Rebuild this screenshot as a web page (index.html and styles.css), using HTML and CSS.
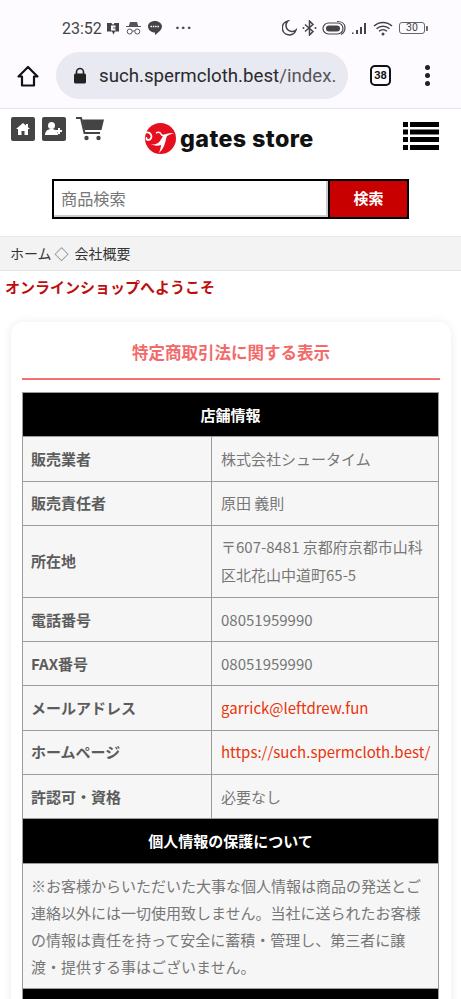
FILE: index.html
```html
<!DOCTYPE html>
<html lang="ja">
<head>
<meta charset="utf-8">
<title>特定商取引法に関する表示</title>
<link rel="stylesheet" href="styles.css">
</head>
<body>
<div class="chrome">
  <div class="status">
    <span class="time">23:52</span>
    <div class="status-left">
      <svg width="12" height="13" viewBox="0 0 12 13"><path d="M0 1h4.500l1 1.500h1L7.500 1H12v8.500H8L6.500 12.500 5 9.500H0z" fill="#444"/><path d="M4 3.500h4.500v2h-2.500v1h2.500v2H4z" fill="#fdfbff"/></svg>
      <svg width="15" height="14" viewBox="0 0 15 14"><path d="M4 1h7l1.200 4H15v1H0V5h2.800z" fill="#555"/><circle cx="3.700" cy="10.500" r="2.500" fill="none" stroke="#555"/><circle cx="11.300" cy="10.500" r="2.500" fill="none" stroke="#555"/><path d="M6.200 10h2.600" stroke="#555"/></svg>
      <svg width="14" height="14" viewBox="0 0 14 14"><path d="M7 0c3.900 0 7 2.500 7 5.500 0 2.800-3 5.500-7 8.500v-2.500c-3.900 0-7-2.600-7-6S3.100 0 7 0z" fill="#444"/><path d="M2.500 5.500h9" stroke="#fdfbff" stroke-width="1.600" stroke-dasharray="1.500 .8"/></svg>
      <span class="dots">···</span>
    </div>
    <div class="status-right">
      <svg width="15" height="16" viewBox="0 0 15 16"><path d="M6 1a7 7 0 1 0 8 9 6 6 0 0 1-8-9z" fill="none" stroke="#444" stroke-width="1.500"/></svg>
      <svg width="15" height="16" viewBox="0 0 15 16"><path d="M3 4.500l8 7-3.500 3.500V1L11 4.500l-8 7" fill="none" stroke="#444" stroke-width="1.500"/><circle cx="1.500" cy="8" r="1" fill="#444"/><circle cx="13.500" cy="8" r="1" fill="#444"/></svg>
      <svg width="24" height="16" viewBox="0 0 24 16"><rect x="1" y="3" width="20" height="11" rx="5.500" fill="none" stroke="#444" stroke-width="1.200"/><rect x="4" y="5.500" width="14" height="6" rx="3" fill="#444"/><path d="M15 1.500c5 0 8 2.500 8 6s-2 6-4 7" fill="none" stroke="#444" stroke-width="1.200"/></svg>
      <svg width="17" height="13" viewBox="0 0 17 13"><path d="M1 10.500h1.500V12H1zM5 8h2v4H5zM9 5h2v7H9zM13 1h2v11h-2z" fill="#444"/></svg>
      <svg width="20" height="15" viewBox="0 0 20 15"><path d="M1 5a13 13 0 0 1 18 0M3.500 7.700a9.500 9.500 0 0 1 13 0M6 10.200a6 6 0 0 1 8 0" fill="none" stroke="#444" stroke-width="1.500"/><circle cx="10" cy="13" r="1.500" fill="#444"/></svg>
      <div class="battery-wrap"><div class="battery">30</div><i class="battery-tip"></i></div>
    </div>
  </div>
  <div class="toolbar">
    <svg class="home-ic" width="24" height="24" viewBox="0 0 24 24"><path d="M12 3L2.500 12.500h3.500V21.500h12V12.500h3.500z" fill="none" stroke="#111" stroke-width="2.200" stroke-linejoin="round"/></svg>
    <div class="omnibox">
      <svg width="14" height="17" viewBox="0 0 14 17"><path d="M3.500 7V5a3.500 3.500 0 0 1 7 0v2" fill="none" stroke="#222" stroke-width="1.600"/><rect x="1" y="6.500" width="12" height="10" rx="1.500" fill="#222"/></svg>
      <span class="url">such.spermcloth.best<span class="url-path">/index.</span></span>
    </div>
    <div class="tabs">38</div>
    <div class="kebab"><i></i><i></i><i></i></div>
  </div>
</div>

<header class="site-head">
  <div class="head-icons">
    <span class="sq"><svg width="14" height="12" viewBox="0 0 14 12"><path d="M7 0L10 2.500V1h2v3.200L14 6h-2v6H8.500V8h-3v4H2V6H0z" fill="#fff"/></svg></span>
    <span class="sq"><svg width="18" height="14" viewBox="0 0 18 14"><circle cx="6.500" cy="3.500" r="3.500" fill="#fff"/><path d="M0 13c0-4 3-6 6.500-6S13 9 13 13z" fill="#fff"/><path d="M14 6v6M11 9h6" stroke="#fff" stroke-width="2"/></svg></span>
    <svg class="cart" width="28" height="24" viewBox="0 0 28 24"><path d="M0 1h5l3.500 15h15.500" fill="none" stroke="#444" stroke-width="2"/><path d="M6 2.500h22l-2.500 10.500H8.500z" fill="#444"/><circle cx="10.500" cy="21" r="2.200" fill="#444"/><circle cx="22.500" cy="21" r="2.200" fill="#444"/></svg>
  </div>
  <div class="logo">
    <svg width="32" height="33" viewBox="0 0 32 33"><circle cx="16.500" cy="16.500" r="15.500" fill="#e60f1e"/><path d="M0 11c3-1 6-1 7 2 1 2 0 5-3 5-1.500 0-2-1.500-1-2.500" fill="none" stroke="#fff" stroke-width="1.800"/><path d="M7 22c3 1 7 0 9-3 2-3 3-6 6-7 3-1 5-1 8-1-3 1-5 2-7 3-1 2-1 4-2 7-1 4-3 7-6 10 1-3 2-6 2-8-3 1-7 1-10-1z" fill="#fff"/><path d="M12 11c2-1 4-1 5 1s2 2 4 1" fill="none" stroke="#fff" stroke-width="1.500"/></svg>
    <span class="logo-text">gates store</span>
  </div>
  <svg class="menu" width="36" height="28" viewBox="0 0 36 28"><path d="M0 0h5v5H0zM7 0h29v5H7zM0 7.500h5v5H0zM7 7.500h29v5H7zM0 15h5v5H0zM7 15h29v5H7zM0 23h5v5H0zM7 23h29v5H7z" fill="#000"/></svg>
</header>

<form class="search">
  <div class="search-input">商品検索</div>
  <div class="search-btn">検索</div>
</form>

<nav class="crumbs">ホーム<span class="sep">◇</span>会社概要</nav>
<h1 class="welcome">オンラインショップへようこそ</h1>

<main class="card">
  <h2 class="card-title">特定商取引法に関する表示</h2>
  <table class="info">
    <colgroup><col class="col-a"><col class="col-b"></colgroup>
    <tr><th colspan="2" class="band">店舗情報</th></tr>
    <tr><th>販売業者</th><td>株式会社シュータイム</td></tr>
    <tr><th>販売責任者</th><td>原田 義則</td></tr>
    <tr class="tall"><th>所在地</th><td>〒607-8481 京都府京都市山科区北花山中道町65-5</td></tr>
    <tr><th>電話番号</th><td>08051959990</td></tr>
    <tr><th>FAX番号</th><td>08051959990</td></tr>
    <tr><th>メールアドレス</th><td class="link">garrick@leftdrew.fun</td></tr>
    <tr><th>ホームページ</th><td class="link nowrap">https://such.spermcloth.best/</td></tr>
    <tr><th>許認可・資格</th><td>必要なし</td></tr>
    <tr><th colspan="2" class="band">個人情報の保護について</th></tr>
    <tr><td colspan="2" class="para">※お客様からいただいた大事な個人情報は商品の発送とご連絡以外には一切使用致しません。当社に送られたお客様の情報は責任を持って安全に蓄積・管理し、第三者に譲渡・提供する事はございません。</td></tr>
    <tr><th colspan="2" class="band"></th></tr>
  </table>
</main>
</body>
</html>
```
FILE: styles.css
```css
* { box-sizing: border-box; }
html, body { margin: 0; padding: 0; height: 999px; overflow: hidden; background: #fff; }
body { font-family: "Noto Sans CJK JP", "Noto Sans", sans-serif; color: #333; }

.chrome { height: 109px; background: #fdfbff; border-bottom: 1px solid #e4e2ea; }
.status { height: 52px; padding: 18px 0 0 62px; display: flex; align-items: flex-start; color: #444; }
.time { font: 16px/21px Roboto, sans-serif; width: 45px; }
.status-left { display: flex; align-items: center; gap: 7px; height: 20px; }
.dots { font: bold 16px/20px Roboto, sans-serif; margin-left: 6px; letter-spacing: 1px; }
.status-right { margin-left: auto; margin-right: 33px; display: flex; align-items: center; gap: 5px; height: 20px; }
.battery-wrap { display: flex; align-items: center; margin-left: 1px; gap: 1px; }
.battery { width: 26px; height: 12px; border: 1px solid #666; border-radius: 3px; font: 10.500px/10px Roboto, sans-serif; text-align: center; }
.battery-tip { display: block; width: 2px; height: 5px; background: #666; border-radius: 0 1px 1px 0; }

.toolbar { display: flex; align-items: center; height: 47px; }
.home-ic { margin-left: 16px; flex: none; }
.omnibox { margin-left: 16px; width: 292px; height: 47px; border-radius: 24px; background: #e8e9f1; display: flex; align-items: center; padding-left: 17px; flex: none; overflow: hidden; }
.url { font: 18.700px/24px Roboto, sans-serif; color: #2a2a2e; margin-left: 12px; white-space: nowrap; }
.url-path { color: #55565c; }
.tabs { margin-left: 22px; width: 21px; height: 21px; border: 2px solid #111; border-radius: 5px; font: bold 11px/17px Roboto, sans-serif; text-align: center; color: #111; flex: none; }
.kebab { margin-left: 34px; display: flex; flex-direction: column; gap: 3px; }
.kebab i { width: 5px; height: 5px; border-radius: 50%; background: #222; display: block; }

.site-head { height: 70px; position: relative; display: flex; padding: 8px 0 0 11px; }
.head-icons { display: flex; align-items: flex-start; gap: 7px; }
.sq { width: 24px; height: 24px; border-radius: 2px; background: #444; display: flex; align-items: center; justify-content: center; }
.cart { margin-left: 3px; margin-top: 0; }
.logo { position: absolute; left: 144px; top: 13px; display: flex; align-items: center; gap: 4px; }
.logo-text { font: 800 23.300px/32px Inter, sans-serif; color: #111; letter-spacing: .4px; white-space: nowrap; }
.menu { position: absolute; left: 403px; top: 13px; }

.search { margin: 0 0 0 52px; width: 357px; height: 40px; display: flex; border: 2px solid #000; }
.search-input { flex: 1; background: #fff; border: 1px solid #ccc; border-width: 0 2px 2px 0; padding-left: 7px; font-size: 16.200px; line-height: 34px; color: #777; }
.search-btn { width: 79px; background: #c80000; border-left: 2px solid #000; color: #fff; font-size: 15px; font-weight: 700; line-height: 34px; text-align: center; }

.crumbs { margin-top: 17px; height: 35px; background: #f3f3f3; border-top: 1px solid #e8e8e8; border-bottom: 1px solid #e4e4e4; padding-left: 10px; font-size: 14px; line-height: 33px; color: #333; }
.sep { display: inline-block; margin: 0 6px 0 3px; color: #666; font-family: "Noto Sans CJK JP", sans-serif; }
.welcome { margin: 5px 0 0 5px; font-size: 15px; line-height: 22px; font-weight: 700; color: #bf0d0d; }

.card { margin: 24px 10px 0 11px; padding: 0 11px; background: #fff; border-radius: 12px; box-shadow: 0 0 10px rgba(0,0,0,.08); height: 700px; }
.card-title { margin: 0; height: 58px; border-bottom: 2px solid #f47070; font-size: 16.500px; line-height: 60px; font-weight: 700; text-align: center; color: #f26a6a; }

.info { margin-top: 12px; width: 417px; border-collapse: collapse; table-layout: fixed; font-size: 15px; background: #f6f6f6; }
.col-a { width: 189px; }
.info th, .info td { border: 1px solid #9c9c9c; padding: 0 8px 1px; height: 44.300px; line-height: 27px; text-align: left; }
.info th { color: #5c5c5c; font-weight: 700; }
.info td { color: #777; font-weight: 400; padding-left: 9px; }
.info .band { background: #000; color: #fff; text-align: center; font-size: 15px; border-color: #9c9c9c; }
.info .tall td { height: 72px; line-height: 28px; }
.info .link { color: #e8340c; }
.info .nowrap { white-space: nowrap; padding-right: 0; }
.info .para { height: 125px; padding: 8px; line-height: 27px; }
```
